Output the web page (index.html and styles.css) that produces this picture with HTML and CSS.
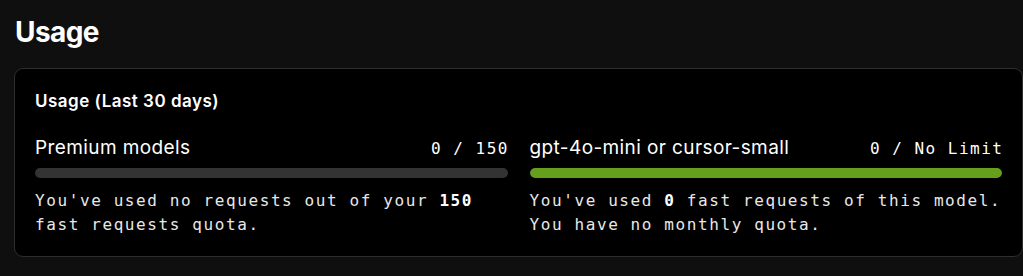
FILE: index.html
```html
<!DOCTYPE html>
<html lang="en">

<head>
    <meta charset="UTF-8">
    <meta name="viewport" content="width=device-width, initial-scale=1.0">
    <title>Usage</title>
    <link rel="stylesheet" href="styles.css">
</head>

<body>
    <main class="page">
        <h1 class="page-title">Usage</h1>

        <section class="card">
            <h2 class="card-title">Usage (Last 30 days)</h2>

            <div class="usage-grid">
                <div class="usage-item">
                    <div class="usage-head">
                        <span class="usage-name">Premium models</span>
                        <span class="usage-count">0 / 150</span>
                    </div>
                    <div class="bar">
                        <div class="bar-fill" style="width: 0%"></div>
                    </div>
                    <p class="usage-note">You've used no requests out of your <b>150</b> fast requests quota.</p>
                </div>

                <div class="usage-item">
                    <div class="usage-head">
                        <span class="usage-name">gpt-4o-mini or cursor-small</span>
                        <span class="usage-count">0 / No Limit</span>
                    </div>
                    <div class="bar">
                        <div class="bar-fill green" style="width: 100%"></div>
                    </div>
                    <p class="usage-note">You've used <b>0</b> fast requests of this model. You have no monthly quota.</p>
                </div>
            </div>
        </section>
    </main>
</body>

</html>
```

FILE: styles.css
```css
* {
    box-sizing: border-box;
}

body {
    margin: 0;
    padding: 0;
    background: #0f0f0f;
    color: #ffffff;
    font-family: 'Inter', 'Noto Sans', sans-serif;
}

.page {
    padding: 16px 0 0 14px;
}

.page-title {
    margin: 0 0 20px 1px;
    font-size: 28px;
    font-weight: 700;
    letter-spacing: -0.6px;
    line-height: 32px;
}

.card {
    background: #000000;
    border: 1px solid #2e2e2e;
    border-radius: 9px;
    padding: 22px 20px 19px 20px;
}

.card-title {
    margin: 0 0 25px 0;
    font-size: 17px;
    font-weight: 600;
    letter-spacing: 0.5px;
    line-height: 20px;
}

.usage-grid {
    display: grid;
    grid-template-columns: 1fr 1fr;
    gap: 22px;
}

.usage-head {
    display: flex;
    justify-content: space-between;
    align-items: baseline;
    height: 24px;
}

.usage-name {
    font-size: 19px;
    letter-spacing: 0.4px;
}

.usage-count {
    font-family: 'DejaVu Sans Mono', monospace;
    font-size: 16px;
    letter-spacing: 1.5px;
    margin-right: -1.5px;
}

.bar {
    height: 10px;
    margin-top: 8px;
    border-radius: 5px;
    background: #333333;
    overflow: hidden;
}

.bar-fill {
    height: 100%;
    border-radius: 5px;
}

.bar-fill.green {
    background: #65a01c;
}

.usage-note {
    margin: 11px 0 0 0;
    font-family: 'DejaVu Sans Mono', monospace;
    font-size: 16px;
    line-height: 24px;
    letter-spacing: 1.6px;
    color: #e8e8e8;
}

.usage-note b {
    color: #ffffff;
}
```
